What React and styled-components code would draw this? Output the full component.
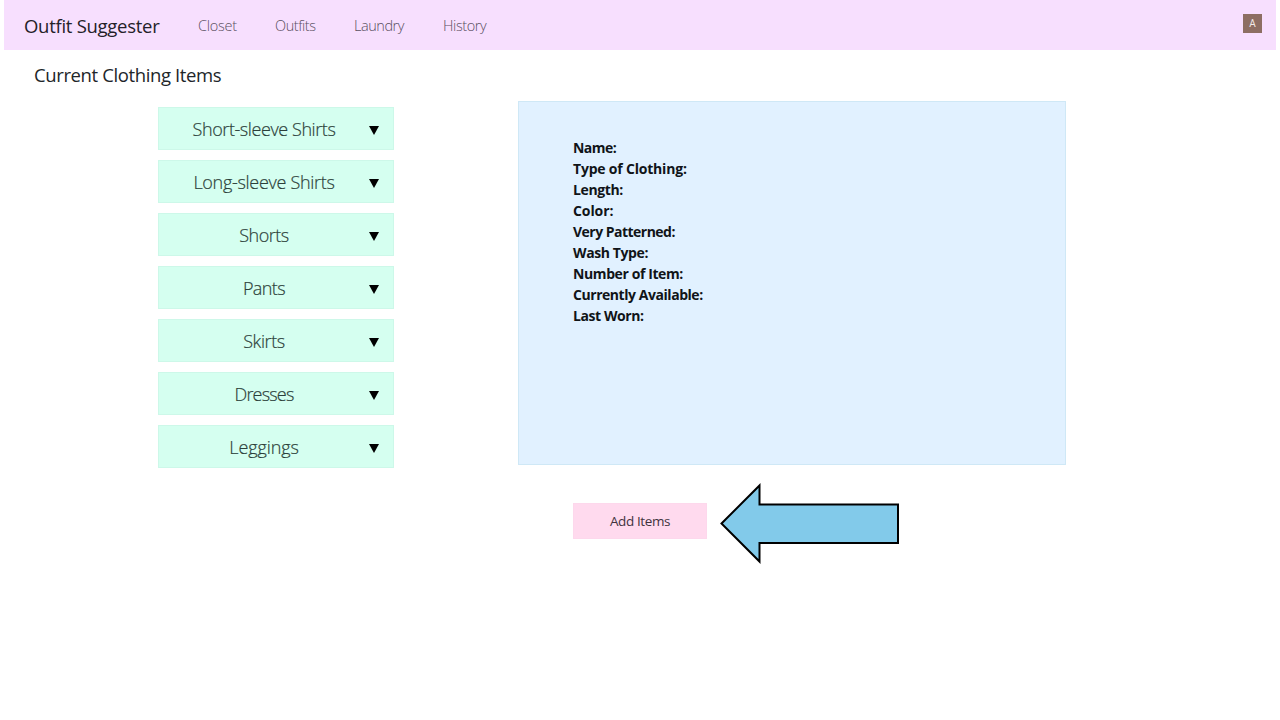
import React from "react";
import styled, { createGlobalStyle } from "styled-components";

const Global = createGlobalStyle`
  *, *::before, *::after { box-sizing: border-box; }
  body { margin: 0; background: #fff; color: #212529; font-family: "Open Sans", "Noto Sans", sans-serif; overflow: hidden; }
`;
const Page = styled.div`
  width: 1280px;
  height: 720px;
  padding: 0 4px;
  display: flex;
  flex-direction: column;
`;
const Navbar = styled.nav`
  height: 50px;
  flex: none;
  display: flex;
  align-items: center;
  padding: 0 14px 3px 20px;
  background: #f7dffe;
`;
const Text = styled.span`
  letter-spacing: ${(p) => p.$ls || 0}px;
  white-space: nowrap;
`;
const Brand = styled.a`
  width: 174px;
  padding-top: 5px;
  font-size: 18.5px;
  line-height: 24px;
  color: #242128;
`;
const NavLink = styled.a`
  width: ${(p) => p.$w}px;
  padding-top: 4px;
  font-size: 14.5px;
  font-weight: 300;
  line-height: 20px;
  color: #594f60;
`;
const Avatar = styled.div`
  width: 19px;
  height: 19px;
  margin-left: auto;
  background: #8d6e63;
  color: #f2eae8;
  font: 10px/20px Roboto, sans-serif;
  text-align: center;
`;
const Heading = styled.h1`
  margin: 12px 0 0 30px;
  font-size: 18.5px;
  font-weight: 400;
  line-height: 26px;
`;
const Main = styled.main`
  display: flex;
  align-items: flex-start;
  gap: 124px;
  padding: 13px 0 0 154px;
`;
const Categories = styled.div`
  width: 236px;
  padding-top: 6px;
  display: flex;
  flex-direction: column;
  gap: 10.5px;
`;
const Category = styled.button`
  height: 42.5px;
  padding: 0 14px 0 0;
  display: flex;
  align-items: center;
  border: 1px solid #cdf8e9;
  background: #d5fff0;
  font-family: inherit;
  color: #2c3f3a;
`;
const CategoryName = styled.span`
  width: 210px;
  padding-top: 2px;
  text-align: center;
  font-size: 18px;
  font-weight: 300;
  line-height: 24px;
  -webkit-text-stroke: 0.2px #2c3f3a;
`;
const Caret = styled.svg`
  display: block;
  width: 10px;
  height: 9px;
  margin: 5px 0 0 auto;
`;
const Details = styled.div`
  width: 548px;
`;
const Panel = styled.section`
  height: 364px;
  padding: 35px 54px;
  background: #e1f1ff;
  border: 1px solid #cfe8f6;
`;
const Field = styled.div`
  height: 21px;
  font-size: 14px;
  font-weight: 700;
  line-height: 21px;
  color: #101418;
`;
const Actions = styled.div`
  display: flex;
  align-items: flex-start;
  gap: 13px;
  padding: 18px 0 0 55px;
`;
const AddButton = styled.button`
  width: 134px;
  height: 36px;
  margin-top: 20px;
  padding: 0;
  border: 1px solid #fdd8ec;
  background: #ffdaee;
  color: #41343d;
  font: 400 13.5px "Open Sans", sans-serif;
`;
const Arrow = styled.svg`
  display: block;
  width: 180px;
  height: 82px;
`;

const links = [
  ["Closet", 77, -0.25],
  ["Outfits", 79, -0.45],
  ["Laundry", 89, -0.45],
  ["History", 60, -0.4],
];
const categories = [
  ["Short-sleeve Shirts", -0.42],
  ["Long-sleeve Shirts", -0.3],
  ["Shorts", -0.5],
  ["Pants", -0.6],
  ["Skirts", -0.4],
  ["Dresses", -0.8],
  ["Leggings", -0.1],
];
const fields = [
  ["Name:", -0.54],
  ["Type of Clothing:", -0.2],
  ["Length:", -0.38],
  ["Color:", -0.1],
  ["Very Patterned:", -0.52],
  ["Wash Type:", -0.4],
  ["Number of Item:", -0.4],
  ["Currently Available:", -0.45],
  ["Last Worn:", -0.43],
];

export default function App() {
  return (
    <>
      <Global />
      <Page>
        <Navbar>
          <Brand><Text $ls={-0.28}>Outfit Suggester</Text></Brand>
          {links.map(([name, width, ls]) => (
            <NavLink key={name} $w={width}><Text $ls={ls}>{name}</Text></NavLink>
          ))}
          <Avatar>A</Avatar>
        </Navbar>
        <Heading><Text $ls={-0.38}>Current Clothing Items</Text></Heading>
        <Main>
          <Categories>
            {categories.map(([name, ls]) => (
              <Category key={name}>
                <CategoryName><Text $ls={ls}>{name}</Text></CategoryName>
                <Caret viewBox="0 0 10 9"><path d="M0 0H10L5 9Z" fill="#000" /></Caret>
              </Category>
            ))}
          </Categories>
          <Details>
            <Panel>
              {fields.map(([name, ls]) => (
                <Field key={name}><Text $ls={ls}>{name}</Text></Field>
              ))}
            </Panel>
            <Actions>
              <AddButton><Text $ls={-0.4}>Add Items</Text></AddButton>
              <Arrow viewBox="0 0 180 82">
                <path d="M1.5 40.5L39.5 2.5V21.5H178V60H39.5V78.5Z" fill="#82caea" stroke="#000" strokeWidth="2" />
              </Arrow>
            </Actions>
          </Details>
        </Main>
      </Page>
    </>
  );
}
